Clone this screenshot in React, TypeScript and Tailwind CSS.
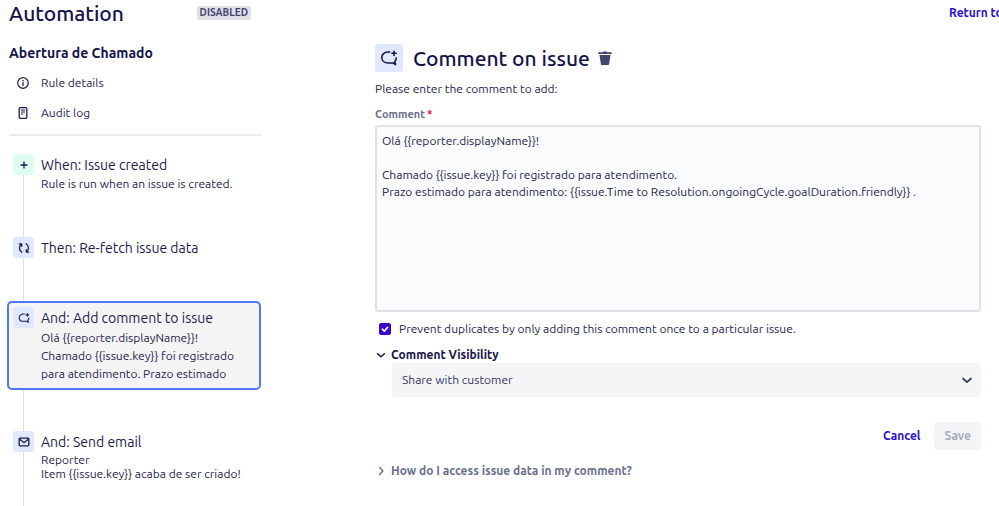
import type { ReactNode } from "react";
import { useState } from "react";
import clsx from "clsx";

const COMMENT = `Olá {{reporter.displayName}}!

Chamado {{issue.key}} foi registrado para atendimento.
Prazo estimado para atendimento: {{issue.Time to Resolution.ongoingCycle.goalDuration.friendly}} .`;

function CommentAddIcon({ className }: { className?: string }) {
  return (
    <svg viewBox="0 0 18 18" fill="none" className={className} aria-hidden="true">
      <path
        d="M9.600 3H8C4.400 3 1.800 5.300 1.800 8.500S4.400 14 8 14h5.200l2.300 1.600-.7-3.100c1-.9 1.500-2.100 1.400-3.500"
        stroke="currentColor"
        strokeWidth="1.6"
        strokeLinecap="round"
        strokeLinejoin="round"
      />
      <path
        d="M14 2.200v4.200M11.900 4.300h4.200"
        stroke="currentColor"
        strokeWidth="1.6"
        strokeLinecap="round"
      />
    </svg>
  );
}

function PlusIcon() {
  return (
    <svg viewBox="0 0 12 12" className="size-3" aria-hidden="true">
      <path d="M6 3v6M3 6h6" stroke="currentColor" strokeWidth="1.3" strokeLinecap="round" />
    </svg>
  );
}

function RefreshIcon() {
  return (
    <svg viewBox="0 0 12 12" fill="none" className="size-3" aria-hidden="true">
      <g stroke="currentColor" strokeWidth="1.3" strokeLinecap="round" strokeLinejoin="round">
        <path d="M3.9 10.2C2.400 9.300 1.500 7.800 1.500 6c0-1.500.7-2.900 1.900-3.800M1.300 1.900h2.400v2.400" />
        <path d="M8.100 1.800c1.500.9 2.400 2.400 2.400 4.200 0 1.500-.7 2.900-1.900 3.800M10.700 10.100H8.300V7.700" />
      </g>
    </svg>
  );
}

function MailIcon() {
  return (
    <svg viewBox="0 0 12 12" fill="none" className="size-3" aria-hidden="true">
      <rect x="1.200" y="2.200" width="9.600" height="7.600" rx="0.800" stroke="currentColor" strokeWidth="1.300" />
      <path d="M1.500 3l4.500 3.700L10.500 3" stroke="currentColor" strokeWidth="1.300" />
    </svg>
  );
}

function InfoIcon() {
  return (
    <svg viewBox="0 0 12 12" fill="none" className="size-3" aria-hidden="true">
      <circle cx="6" cy="6" r="5.300" stroke="currentColor" strokeWidth="1.200" />
      <circle cx="6" cy="3.700" r="0.800" fill="currentColor" />
      <path d="M6 5.700v2.800" stroke="currentColor" strokeWidth="1.300" strokeLinecap="round" />
    </svg>
  );
}

function LogIcon() {
  return (
    <svg viewBox="0 0 12 12" fill="none" className="size-3" aria-hidden="true">
      <rect x="2.200" y="0.700" width="7.600" height="10.600" rx="1" stroke="currentColor" strokeWidth="1.300" />
      <path d="M4 3h4M4 5h4M4 7h2.200" stroke="currentColor" strokeWidth="1.100" />
    </svg>
  );
}

function TrashIcon() {
  return (
    <svg viewBox="0 0 14 14" fill="currentColor" className="size-3.5" aria-hidden="true">
      <path d="M.8 1.300h4L5.300.400h3.400l.5.900h4c.4 0 .6.300.6.600v1H.2v-1c0-.3.200-.6.600-.6z" />
      <path d="M1.500 3.900h11l-1.400 9c-.1.600-.6 1.100-1.200 1.100H4.100c-.6 0-1.100-.5-1.200-1.100z" />
    </svg>
  );
}

function Chevron({ className }: { className?: string }) {
  return (
    <svg viewBox="0 0 12 12" fill="none" className={className} aria-hidden="true">
      <path
        d="M2.600 4.700L6 7.800l3.400-3.100"
        stroke="currentColor"
        strokeWidth="1.500"
        strokeLinecap="round"
        strokeLinejoin="round"
      />
    </svg>
  );
}

/** One component of the rule chain, with the rail that leads to the next one. */
function Step({
  icon,
  title,
  children,
  trigger = false,
  selected = false,
  className,
}: {
  icon: ReactNode;
  title: string;
  children?: ReactNode;
  trigger?: boolean;
  selected?: boolean;
  className?: string;
}) {
  return (
    <li className={clsx("flex flex-col", className)}>
      <button
        type="button"
        className={clsx(
          "flex w-full gap-[7px] text-left",
          selected
            ? "rounded-[5px] border-2 border-[#4c78fa] bg-[#f4f4f4] pt-1 pb-[5px] pl-1"
            : "flex-1 pl-1.5",
        )}
      >
        <span className="flex flex-col items-center self-stretch">
          <span
            className={clsx(
              "flex size-[21px] shrink-0 items-center justify-center rounded-[3px]",
              trigger ? "bg-[#dcfff1]" : "bg-[#dfe8ff]",
            )}
          >
            {icon}
          </span>
          {!selected && <span className="w-px flex-1 bg-[#dddee6]" />}
        </span>
        <span className="min-w-0 flex-1 pt-px">
          <span className="block text-[14px] leading-[21px]">{title}</span>
          {children}
        </span>
      </button>
      {selected && <span className="ml-4 w-px flex-1 bg-[#dddee6]" />}
    </li>
  );
}

export default function App() {
  const [comment, setComment] = useState(COMMENT);
  const [once, setOnce] = useState(true);

  return (
    <div className="flex min-h-screen flex-col overflow-hidden bg-white font-['Ubuntu','Noto_Sans',sans-serif] text-[12px] leading-[18px] text-[#1d1b4c]">
      <header className="flex h-[26px] items-center pl-[9px]">
        <div className="flex w-[242px] items-center justify-between">
          <h1 className="text-[21px] leading-6 font-medium text-[#14124a]">Automation</h1>
          <span className="rounded-[3px] bg-[#dfe1e6] px-[3px] text-[10px] leading-[14px] font-bold text-[#42466e]">
            DISABLED
          </span>
        </div>
        <div className="ml-auto w-[50px] overflow-hidden">
          <a href="#rules" className="font-semibold whitespace-nowrap text-[#2b0fd0]">
            Return to
          </a>
        </div>
      </header>

      <div className="flex flex-1">
        <aside className="flex w-[261px] shrink-0 flex-col">
          <h2 className="mt-[18px] pl-[9px] text-[14px] leading-[18px] font-bold text-[#14124a]">
            Abertura de Chamado
          </h2>
          <nav className="mt-3 flex flex-col gap-3 pl-[17px]">
            <a href="#details" className="flex items-center gap-3">
              <InfoIcon />
              Rule details
            </a>
            <a href="#audit" className="flex items-center gap-3">
              <LogIcon />
              Audit log
            </a>
          </nav>
          <hr className="mt-3 ml-[9px] border-t-2 border-[#ebecf0]" />

          <ol className="mt-[18px] flex flex-1 flex-col pl-[7px]">
            <Step icon={<PlusIcon />} title="When: Issue created" trigger className="min-h-[83px]">
              <span className="block leading-4">Rule is run when an issue is created.</span>
            </Step>
            <Step icon={<RefreshIcon />} title="Then: Re-fetch issue data" className="min-h-16" />
            <Step
              icon={<CommentAddIcon className="size-3" />}
              title="And: Add comment to issue"
              selected
              className="min-h-[130px]"
            >
              <span className="block">Olá {"{{reporter.displayName}}"}!</span>
              <span className="block">Chamado {"{{issue.key}}"} foi registrado</span>
              <span className="block">para atendimento. Prazo estimado</span>
            </Step>
            <Step icon={<MailIcon />} title="And: Send email" className="flex-1">
              <span className="block leading-[14px]">Reporter</span>
              <span className="block leading-[14px]">Item {"{{issue.key}}"} acaba de ser criado!</span>
            </Step>
          </ol>
        </aside>

        <main className="mr-[18px] ml-[114px] min-w-0 flex-1 pt-[18px]">
          <div className="flex items-center">
            <span className="flex size-7 items-center justify-center rounded-[3px] bg-[#dfe8ff] text-[#14124a]">
              <CommentAddIcon className="size-[18px]" />
            </span>
            <h2 className="ml-2.5 text-[21px] leading-7 font-medium text-[#14124a]">
              Comment on issue
            </h2>
            <button type="button" aria-label="Delete" className="ml-2 text-[#42466e]">
              <TrashIcon />
            </button>
          </div>

          <form onSubmit={(e) => e.preventDefault()}>
            <p className="mt-2">Please enter the comment to add:</p>
            <label
              htmlFor="comment"
              className="mt-2 flex gap-0.5 text-[11px] leading-4 font-semibold text-[#6b6f8f]"
            >
              Comment<span className="text-[#f0141e]">*</span>
            </label>
            <textarea
              id="comment"
              value={comment}
              onChange={(e) => setComment(e.target.value)}
              className="mt-[3px] block h-[187px] w-full resize-none rounded-[3px] border-2 border-[#dfe1e6] bg-[#fafbfc] px-[5px] py-[5px] leading-[17px]"
            />

            <div className="mt-2 flex items-center gap-2 pl-1">
              <span className="relative flex size-3">
                <input
                  id="once"
                  type="checkbox"
                  checked={once}
                  onChange={(e) => setOnce(e.target.checked)}
                  className="peer size-3 appearance-none rounded-[2px] border border-[#dfe1e6] checked:border-[#3a06cc] checked:bg-[#3a06cc]"
                />
                <svg
                  viewBox="0 0 12 12"
                  fill="none"
                  className="pointer-events-none absolute inset-0 hidden size-3 peer-checked:block"
                  aria-hidden="true"
                >
                  <path
                    d="M3.300 6.200l2 1.900 3.400-3.800"
                    stroke="white"
                    strokeWidth="1.600"
                    strokeLinecap="round"
                    strokeLinejoin="round"
                  />
                </svg>
              </span>
              <label htmlFor="once">
                Prevent duplicates by only adding this comment once to a particular issue.
              </label>
            </div>

            <button
              type="button"
              aria-expanded="true"
              className="mt-2 flex items-center gap-1 leading-[17px] font-bold text-[#14124a]"
            >
              <Chevron className="size-3" />
              Comment Visibility
            </button>
            <div className="relative ml-[17px]">
              <select
                aria-label="Comment Visibility"
                className="block h-[34px] w-full appearance-none rounded-[3px] bg-[#f4f5f7] px-2.5 text-[#33335f]"
              >
                <option>Share with customer</option>
              </select>
              <Chevron className="pointer-events-none absolute top-2.5 right-[7px] size-3.5 text-[#343a66]" />
            </div>

            <div className="mt-[25px] flex justify-end gap-0.5">
              <button type="button" className="h-7 px-3 font-semibold text-[#2b0fd0]">
                Cancel
              </button>
              <button
                type="submit"
                disabled
                className="h-7 rounded-[3px] bg-[#f4f5f7] px-2.5 font-semibold text-[#a5adba]"
              >
                Save
              </button>
            </div>
          </form>

          <button
            type="button"
            aria-expanded="false"
            className="mt-3 flex items-center gap-1 font-semibold text-[#6b6f8f]"
          >
            <Chevron className="size-3 -rotate-90" />
            How do I access issue data in my comment?
          </button>
        </main>
      </div>
    </div>
  );
}
